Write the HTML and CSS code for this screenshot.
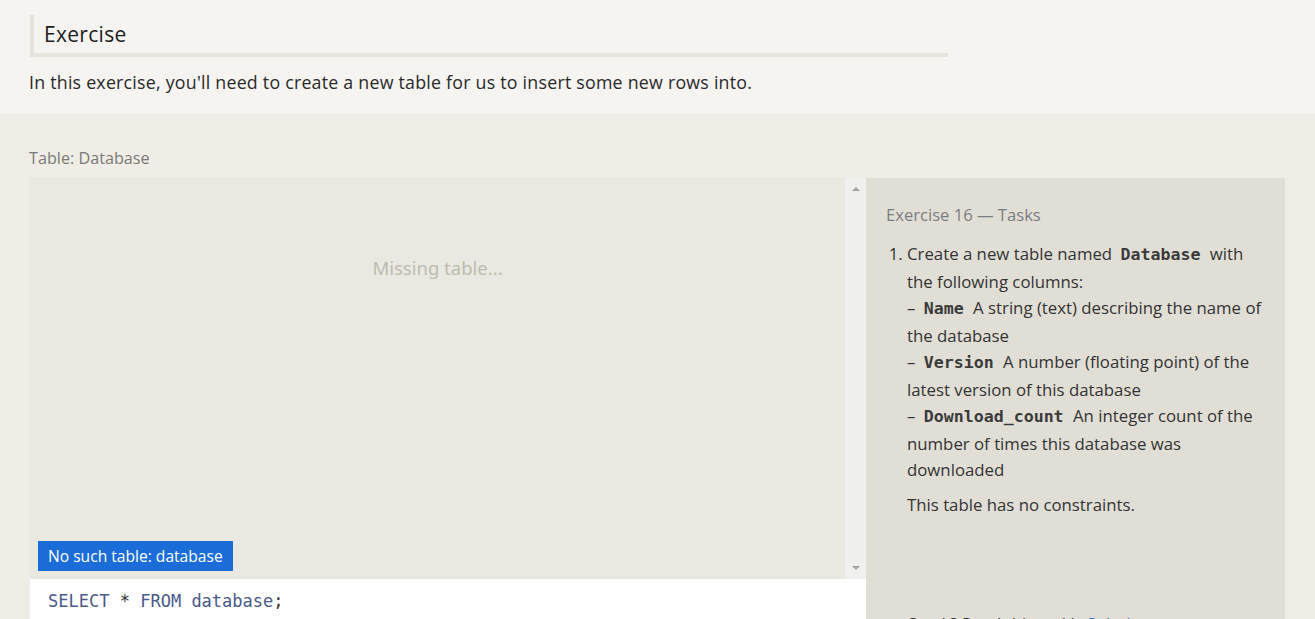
FILE: index.html
```html
<!DOCTYPE html>
<html>
<head>
<meta charset="utf-8">
<link rel="stylesheet" href="styles.css">
</head>
<body>
<div class="intro">
  <h2 class="ex-title">Exercise</h2>
  <p class="ex-desc">In this exercise, you'll need to create a new table for us to insert some new rows into.</p>
</div>
<div class="work">
  <div class="table-label">Table: Database</div>
  <div class="panel">
    <div class="left">
      <div class="result-wrap">
        <div class="result">
          <div class="missing">Missing table...</div>
          <div class="badge">No such table: database</div>
        </div>
        <div class="scroll">
          <span class="arr up"></span>
          <span class="arr down"></span>
        </div>
      </div>
      <div class="editor"><span class="kw">SELECT</span> <span class="op">*</span> <span class="kw">FROM</span> <span class="id">database</span><span class="op">;</span></div>
    </div>
    <div class="tasks">
      <div class="tasks-title">Exercise 16 — Tasks</div>
      <ol class="task-list">
        <li>Create a new table named <code>Database</code> with the following columns:<br>
          – <code>Name</code> A string (text) describing the name of the database<br>
          – <code>Version</code> A number (floating point) of the latest version of this database<br>
          – <code>Download_count</code> An integer count of the number of times this database was downloaded
          <p class="note">This table has no constraints.</p>
        </li>
      </ol>
      <div class="stuck">Stuck? Read this task's <span class="link">Solution</span>.</div>
    </div>
  </div>
</div>
</body>
</html>
```
FILE: styles.css
```css
html, body {
  margin: 0;
  padding: 0;
  height: 619px;
  overflow: hidden;
}
body {
  font-family: "Open Sans", "Noto Sans", sans-serif;
  color: #2b2b2b;
  background: #efede5;
}
.intro {
  background: #f5f4f0;
  padding: 15px 29px 20px 30px;
}
.ex-title {
  margin: 0;
  width: 904px;
  font-weight: 400;
  font-size: 21px;
  line-height: 34px;
  padding: 2px 0 2px 10px;
  border-left: 4px solid #e4e3dc;
  border-bottom: 4px solid #e4e3dc;
  color: #1e1e1e;
  letter-spacing: 0.3px;
}
.ex-desc {
  margin: 13px 0 0 -1px;
  font-size: 17.8px;
  line-height: 24px;
  letter-spacing: 0.23px;
  color: #2a2a2a;
}
.work {
  padding: 32px 30px 0 30px;
}
.table-label {
  font-size: 16.2px;
  color: #7a7a76;
  line-height: 24px;
  margin: 0 0 8px -1px;
}
.panel {
  display: flex;
  height: 460px;
}
.left {
  width: 836px;
  display: flex;
  flex-direction: column;
}
.result-wrap {
  display: flex;
  height: 401px;
}
.result {
  flex: 1;
  background: #e9e8e1;
  border-top: 1px solid #e4e3dc;
  display: flex;
  flex-direction: column;
  justify-content: space-between;
  align-items: center;
  padding: 76px 8px 8px 8px;
}
.missing {
  font-family: "Noto Sans", "Open Sans", sans-serif;
  font-size: 18.5px;
  color: #bdbcae;
}
.badge {
  align-self: flex-start;
  background: #1a6dd8;
  color: #fff;
  font-size: 15.6px;
  line-height: 30px;
  padding: 0 10px;
}
.scroll {
  width: 21px;
  background: #f0f0ef;
  display: flex;
  flex-direction: column;
  justify-content: space-between;
  align-items: center;
  padding: 9px 0 9px 0;
}
.arr {
  width: 0;
  height: 0;
  border-left: 4px solid transparent;
  border-right: 4px solid transparent;
}
.arr.up { border-bottom: 4px solid #a3a3a3; }
.arr.down { border-top: 4px solid #a3a3a3; }
.editor {
  flex: 1;
  background: #ffffff;
  font-family: "DejaVu Sans Mono", monospace;
  font-size: 17px;
  padding: 12px 18px;
  color: #4a5a8a;
  white-space: pre;
}
.editor .op { color: #333; }
.tasks {
  flex: 1;
  background: #e1dfd5;
  padding: 25px 20px 0 20px;
  overflow: hidden;
}
.tasks-title {
  font-size: 16.6px;
  color: #7a7d80;
  line-height: 24px;
}
.task-list {
  margin: 14px 0 0 0;
  padding-left: 21px;
  font-size: 16.8px;
  line-height: 26.5px;
  color: #333;
}
.task-list code {
  font-family: "DejaVu Sans Mono", monospace;
  font-weight: 700;
  font-size: 16.6px;
  color: #3a3a3a;
  padding: 0 5px 0 4px;
}
.note {
  margin: 8px 0 0 0;
}
.stuck {
  margin-top: 94px;
  padding-left: 22px;
  font-size: 16.8px;
  color: #333;
}
.link { color: #2a6fd0; }
```
